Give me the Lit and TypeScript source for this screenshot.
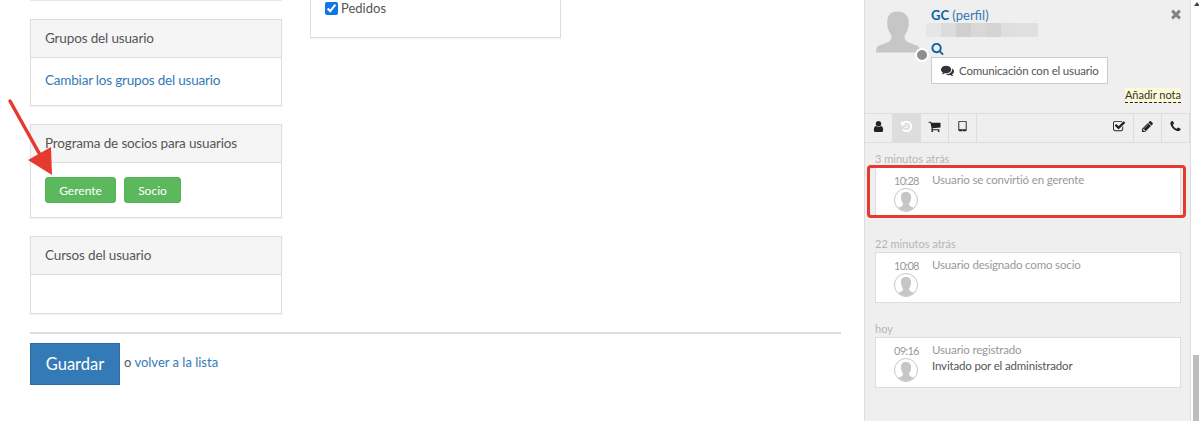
import { LitElement, html, css, svg } from "lit";
import { customElement } from "lit/decorators.js";

const P = {
  user: "M1536 1399q0 109-62.5 187t-150.5 78h-854q-88 0-150.5-78t-62.5-187q0-85 8.5-160.5t31.5-152 58.5-131 94-89 134.5-34.5q131 128 313 128t313-128q76 0 134.5 34.5t94 89 58.5 131 31.5 152 8.5 160.5zm-256-887q0 159-112.5 271.5t-271.5 112.5-271.5-112.5-112.5-271.5 112.5-271.5 271.5-112.5 271.5 112.5 112.5 271.5z",
  history: "M1664 896q0 156-61 298t-164 245-245 164-298 61q-172 0-327-72.5t-264-204.5q-7-10-6.5-22.5t8.5-20.5l137-138q10-9 25-9 16 2 23 12 73 95 179 147t225 52q104 0 198.5-40.5t163.5-109.5 109.5-163.5 40.5-198.5-40.5-198.5-109.5-163.5-163.5-109.5-198.5-40.5q-98 0-188 35.5t-160 101.5l137 138q31 30 14 69-17 40-59 40h-448q-26 0-45-19t-19-45v-448q0-42 40-59 39-17 69 14l130 129q107-101 244.5-156.5t284.5-55.5q156 0 298 61t245 164 164 245 61 298zm-640-288v448q0 14-9 23t-23 9h-320q-14 0-23-9t-9-23v-64q0-14 9-23t23-9h224v-352q0-14 9-23t23-9h64q14 0 23 9t9 23z",
  cart: "M704 1536q0 52-38 90t-90 38-90-38-38-90 38-90 90-38 90 38 38 90zm896 0q0 52-38 90t-90 38-90-38-38-90 38-90 90-38 90 38 38 90zm128-1088v512q0 24-16.5 42.5t-40.5 21.5l-1044 122q13 60 13 70 0 16-24 64h920q26 0 45 19t19 45-19 45-45 19h-1024q-26 0-45-19t-19-45q0-11 8-31.5t16-36 21.5-40 15.5-29.5l-177-823h-204q-26 0-45-19t-19-45 19-45 45-19h256q16 0 28.5 6.5t19.5 15.5 13 24.5 8 26 5.5 29.5 4.5 26h1201q26 0 45 19t19 45z",
  tablet: "M960 1408q0-26-19-45t-45-19-45 19-19 45 19 45 45 19 45-19 19-45zm384-160v-960q0-13-9.5-22.5t-22.5-9.5h-832q-13 0-22.5 9.5t-9.5 22.5v960q0 13 9.5 22.5t22.5 9.5h832q13 0 22.5-9.5t9.5-22.5zm128-960v1088q0 66-47 113t-113 47h-832q-66 0-113-47t-47-113v-1088q0-66 47-113t113-47h832q66 0 113 47t47 113z",
  check: "M1408 930v318q0 119-84.5 203.5t-203.5 84.5h-832q-119 0-203.5-84.5t-84.5-203.5v-832q0-119 84.5-203.5t203.5-84.5h832q63 0 117 25 15 7 18 23 3 17-9 29l-49 49q-10 10-23 10-3 0-9-2-23-6-45-6h-832q-66 0-113 47t-47 113v832q0 66 47 113t113 47h832q66 0 113-47t47-113v-254q0-13 9-22l64-64q10-10 23-10 6 0 12 3 20 8 20 29zm231-489l-814 814q-24 24-57 24t-57-24l-430-430q-24-24-24-57t24-57l110-110q24-24 57-24t57 24l263 263 647-647q24-24 57-24t57 24l110 110q24 24 24 57t-24 57z",
  pencil: "M491 1536l91-91-235-235-91 91v107h128v128h107zm523-928q0-22-22-22-10 0-17 7l-542 542q-7 7-7 17 0 22 22 22 10 0 17-7l542-542q7-7 7-17zm-54-192l416 416-832 832h-416v-416zm683 96q0 53-37 90l-166 166-416-416 166-165q36-38 90-38 53 0 91 38l235 234q37 39 37 91z",
  phone: "M1600 1240q0 27-10 70.5t-21 68.5q-21 50-122 106-94 51-186 51-27 0-53-3.5t-57.5-12.5-47-14.5-55.5-20.5-49-18q-98-35-175-83-127-79-264-216t-216-264q-48-77-83-175-3-9-18-49t-20.5-55.5-14.5-47-12.5-57.5-3.5-53q0-92 51-186 56-101 106-122 25-11 68.5-21t70.5-10q14 0 21 3 18 6 53 76 11 19 30 54t35 63.5 31 53.5q3 4 17.5 25t21.5 35.5 7 28.5q0 20-28.5 50t-62 55-62 53-28.5 46q0 9 5 22.5t8.5 20.5 14 24 11.5 19q76 137 174 235t235 174q2 1 19 11.5t24 14 20.5 8.5 22.5 5q18 0 46-28.5t53-62 55-62 50-28.5q14 0 28.5 7t35.5 21.5 25 17.5q25 15 53.5 31t63.5 35 54 30q70 35 76 53 3 7 3 21z",
  search: "M1216 832q0-185-131.5-316.5t-316.5-131.5-316.5 131.5-131.5 316.5 131.5 316.5 316.5 131.5 316.5-131.5 131.5-316.5zm512 832q0 52-38 90t-90 38q-54 0-90-38l-343-342q-179 124-399 124-143 0-273.5-55.5t-225-150-150-225-55.5-273.5 55.5-273.5 150-225 225-150 273.5-55.5 273.5 55.5 225 150 150 225 55.5 273.5q0 220-124 399l343 343q37 37 37 90z",
  comments: "M1408 768q0 139-94 257t-256.5 186.5-353.5 68.5q-86 0-176-16-124 88-278 128-36 9-86 16h-3q-11 0-20.5-8t-11.5-21q-1-3-1-6.5t.5-6.5 2-6l2.5-5 3.5-5.5 4-5 4.5-5 4-4.5q5-6 23-25t26-29.5 22.5-29 25-38.5 20.5-44q-124-72-195-177t-71-224q0-139 94-257t256.5-186.5 353.5-68.5 353.5 68.5 256.5 186.5 94 257zm384 256q0 120-71 224.5t-195 176.5q10 24 20.5 44t25 38.5 22.5 29 26 29.5 23 25q1 1 4 4.5t4.5 5 4 5 3.5 5.5l2.5 5 2 6 .5 6.5-1 6.5q-3 14-13 22t-22 7q-50-7-86-16-154-40-278-128-90 16-176 16-271 0-472-132 58 4 88 4 161 0 309-45t264-129q125-92 192-212t67-254q0-77-23-152 129 71 204 178t75 230z",
  times: "M1490 1322q0 40-28 68l-136 136q-28 28-68 28t-68-28l-294-294-294 294q-28 28-68 28t-68-28l-136-136q-28-28-28-68t28-68l294-294-294-294q-28-28-28-68t28-68l136-136q28-28 68-28t68 28l294 294 294-294q28-28 68-28t68 28l136 136q28 28 28 68t-28 68l-294 294 294 294q28 28 28 68z",
};

const fa = (d: string, cls: string) =>
  html`<svg class=${cls} viewBox="0 0 1792 1792" aria-hidden="true"><path fill="currentColor" d=${d}></path></svg>`;

const silhouette = svg`<path fill="#c6c6c6" d="M22 0c7.500 0 11.500 4.500 11.500 11.500 0 3-.6 6-1.600 8.600-.8 2-2.400 3.400-2.600 5-.2 2 .3 4 1.600 5.200 3.200 2.600 12.100 3.700 13.600 7.200.4 1 .5 2.800.5 4.500H0c0-1.700.1-3.500.5-4.500 1.500-3.500 10.400-4.600 13.600-7.200 1.300-1.200 1.800-3.200 1.600-5.200-.2-1.600-1.600-3-2.600-5-1-2.600-1.600-5.600-1.600-8.600C11.500 4.500 14.500 0 22 0z"></path>`;

const blurCells = [
  ["#e6e6e6", 15], ["#dcdcdc", 15], ["#cfcfcf", 15], ["#d8d8d8", 15],
  ["#d4d4d4", 15], ["#dedede", 15], ["#e0e0e0", 22],
];

interface EventItem { label: string; time: string; text: string; note?: string; }
const events: EventItem[] = [
  { label: "3 minutos atrás", time: "10:28", text: "Usuario se convirtió en gerente" },
  { label: "22 minutos atrás", time: "10:08", text: "Usuario designado como socio" },
  { label: "hoy", time: "09:16", text: "Usuario registrado", note: "Invitado por el administrador" },
];

@customElement("app-root")
export class AppRoot extends LitElement {
  static styles = css`
    :host { display: block; width: 1199px; height: 421px; overflow: hidden; position: relative; background: #fff;
      font-family: Lato, "Liberation Sans", sans-serif; font-size: 13.5px; color: #555; }
    * { box-sizing: border-box; }
    a { color: #337ab7; text-decoration: none; }
    .page { display: flex; height: 421px; }
    .main { width: 864px; padding-left: 30px; padding-right: 23px; flex: none; }
    .cols { display: flex; gap: 28px; height: 332px; }
    .col-left { width: 252px; flex: none; }
    .col-mid { width: 251px; flex: none; }
    .stub { height: 1px; background: #e8e8e8; margin-bottom: 18px; }
    .panel { border: 1px solid #ddd; background: #fff; margin-bottom: 18px; box-shadow: 0 1px 1px rgba(0,0,0,.05); }
    .panel-h { height: 38px; background: #f5f5f5; border-bottom: 1px solid #ddd; padding: 0 14px 2px; display: flex; align-items: center; color: #555; letter-spacing: -.15px; }
    .panel-b { padding: 14px; }
    .b-groups { height: 47px; padding-top: 14px; line-height: 17px; letter-spacing: -.2px; }
    .b-prog { height: 54px; display: flex; gap: 8px; padding-top: 14px; }
    .b-course { height: 38px; padding: 0; }
    .btn-green { height: 26px; background: #5cb85c; border: 1px solid #55b255; border-radius: 3px; color: #fff; font: inherit; font-size: 12px; padding: 0; display: flex; align-items: center; justify-content: center; }
    .w-g { width: 71px; }
    .w-s { width: 57px; }
    .mid-panel { height: 38px; border: 1px solid #ddd; border-top: none; box-shadow: 0 1px 1px rgba(0,0,0,.05); padding-left: 14px; display: flex; align-items: flex-start; gap: 3px; line-height: 16px; font-size: 13px; }
    .mid-panel input { width: 13px; height: 13px; margin: 2px 0 0; accent-color: #0f76e8; }
    .foot { border-top: 2px solid #ddd; height: 89px; display: flex; align-items: flex-start; padding-top: 9px; }
    .save { width: 90px; height: 42px; background: #337ab7; border: 1px solid #2e6da4; color: #fff; font: inherit; font-size: 16.5px; padding: 0; }
    .foot-text { margin: 11px 0 0 4px; font-size: 13px; line-height: 17px; }

    .side { width: 327px; flex: none; height: 421px; background: #efefef; border-left: 1px solid #ddd; border-right: 1px solid #ddd; display: flex; flex-direction: column; }
    .head { height: 113px; display: flex; padding: 11px 0 0 11px; position: relative; }
    .big-avatar { width: 44px; height: 42px; flex: none; margin-right: 11px; }
    .dot { position: absolute; left: 50px; top: 48px; width: 14px; height: 14px; background: #8f8f8f; border: 2px solid #fff; border-radius: 50%; }
    .info { flex: 1; min-width: 0; padding-right: 9px; }
    .name { font-size: 13px; line-height: 16px; margin-top: -4px; color: #337ab7; display: flex; justify-content: space-between; height: 17px; }
    .name b { color: #0b62a4; }
    .close { width: 14px; height: 14px; color: #7f8285; margin: 0 -2px 0 0; }
    .blur { display: flex; height: 17px; margin-left: -5px; margin-top: -1px; }
    .blur span { display: block; height: 14px; }
    .search { display: block; width: 13px; height: 13px; color: #0b62a4; margin-top: 2px; }
    .talk { width: 177px; height: 27px; margin-top: 2px; background: #fff; border: 1px solid #ccc; display: flex; align-items: center; padding-left: 9px; gap: 5px; font-size: 11.5px; letter-spacing: -.18px; color: #555; white-space: nowrap; }
    .talk svg { width: 13px; height: 13px; color: #333; flex: none; }
    .note-row { display: flex; justify-content: flex-end; margin-top: 4px; }
    .note { background: #fdfbd7; border-bottom: 1px dashed #222; font-size: 11px; line-height: 13px; height: 15px; color: #333; }
    .tabs { height: 30px; border-top: 1px solid #ddd; border-bottom: 1px solid #ddd; display: flex; flex: none; }
    .tab { width: 28px; height: 28px; border-right: 1px solid #ddd; display: flex; align-items: center; justify-content: center; padding-bottom: 3px; color: #222; flex: none; }
    .tab svg { width: 13px; height: 13px; }
    .tab.active { background: #ddd; color: #fff; }
    .tabs .spacer { flex: 1; }
    .feed { padding: 10px 9px 0 10px; }
    .label { font-size: 11px; line-height: 11px; height: 14px; color: #b5b5b5; }
    .card { height: 51px; background: #fff; border: 1px solid #ddd; display: flex; margin-bottom: 20px; }
    .card-l { width: 56px; flex: none; display: flex; flex-direction: column; align-items: flex-end; padding-right: 14px; padding-top: 5px; }
    .time { font-size: 11px; line-height: 15px; color: #999; width: 24px; text-align: center; white-space: nowrap; letter-spacing: -.7px; }
    .ava { width: 24px; height: 24px; display: block; }
    .card-r { font-size: 11.5px; letter-spacing: -.16px; color: #999; padding-top: 4px; line-height: 16px; }
    .card-note { color: #555; }
    .scroll { width: 8px; flex: none; position: relative; background: #fff; }
    .scroll-up { width: 0; height: 0; border: 3px solid transparent; border-bottom: 4px solid #444; border-top: none; margin: 2px 0 0 3px; }
    .thumb { position: absolute; left: 2px; right: 0; top: 355px; bottom: 0; background: #bdbdbd; }
    .arrow { position: absolute; left: 0; top: 90px; width: 60px; height: 90px; pointer-events: none; }
    .hl { position: absolute; left: 867px; top: 165px; width: 319px; height: 53px; border: 3px solid #e53a2f; border-radius: 4px; pointer-events: none; }
  `;

  render() {
    return html`
      <div class="page">
        <div class="main">
          <div class="cols">
            <div class="col-left">
              <div class="stub"></div>
              <div class="panel">
                <div class="panel-h">Grupos del usuario</div>
                <div class="panel-b b-groups"><a href="#">Cambiar los grupos del usuario</a></div>
              </div>
              <div class="panel">
                <div class="panel-h">Programa de socios para usuarios</div>
                <div class="panel-b b-prog">
                  <button class="btn-green w-g">Gerente</button>
                  <button class="btn-green w-s">Socio</button>
                </div>
              </div>
              <div class="panel">
                <div class="panel-h">Cursos del usuario</div>
                <div class="panel-b b-course"></div>
              </div>
            </div>
            <div class="col-mid">
              <div class="mid-panel"><input type="checkbox" checked /><span>Pedidos</span></div>
            </div>
          </div>
          <div class="foot">
            <button class="save">Guardar</button>
            <div class="foot-text">o <a href="#">volver a la lista</a></div>
          </div>
        </div>

        <div class="side">
          <div class="head">
            <svg class="big-avatar" viewBox="0 0 45 42">${silhouette}</svg>
            <div class="dot"></div>
            <div class="info">
              <div class="name"><span><b>GC</b> (perfil)</span>${fa(P.times, "close")}</div>
              <div class="blur">${blurCells.map(([c, w]) => html`<span style="background:${c};width:${w}px"></span>`)}</div>
              ${fa(P.search, "search")}
              <div class="talk">${fa(P.comments, "")}Comunicación con el usuario</div>
              <div class="note-row"><span class="note">Añadir nota</span></div>
            </div>
          </div>
          <div class="tabs">
            <div class="tab">${fa(P.user, "")}</div>
            <div class="tab active">${fa(P.history, "")}</div>
            <div class="tab">${fa(P.cart, "")}</div>
            <div class="tab">${fa(P.tablet, "")}</div>
            <div class="spacer"></div>
            <div class="tab">${fa(P.check, "")}</div>
            <div class="tab">${fa(P.pencil, "")}</div>
            <div class="tab">${fa(P.phone, "")}</div>
          </div>
          <div class="feed">
            ${events.map(
              (e) => html`
                <div class="label">${e.label}</div>
                <div class="card">
                  <div class="card-l">
                    <div class="time">${e.time}</div>
                    <svg class="ava" viewBox="0 0 24 24">
                      <defs><clipPath id="c"><circle cx="12" cy="12" r="11"></circle></clipPath></defs>
                      <circle cx="12" cy="12" r="11.500" fill="#fff" stroke="#c6c6c6"></circle>
                      <g clip-path="url(#c)"><g transform="translate(1.700 4) scale(.46)">${silhouette}</g></g>
                    </svg>
                  </div>
                  <div class="card-r">
                    <div>${e.text}</div>
                    ${e.note ? html`<div class="card-note">${e.note}</div>` : ""}
                  </div>
                </div>
              `
            )}
          </div>
        </div>
        <div class="scroll"><div class="scroll-up"></div><div class="thumb"></div></div>
      </div>
      <svg class="arrow" viewBox="0 0 60 90">
        <path d="M10 11 L44 72" stroke="#e53a2f" stroke-width="3.500" stroke-linecap="round" fill="none"></path>
        <path d="M28 70 L51 57 L52 85 Z" fill="#e53a2f"></path>
      </svg>
      <div class="hl"></div>
    `;
  }
}
